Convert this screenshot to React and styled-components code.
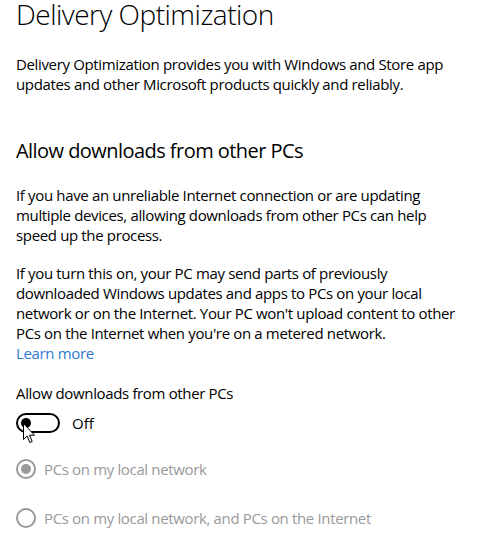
import React from "react";
import styled, { createGlobalStyle } from "styled-components";

const Global = createGlobalStyle`
  html, body { margin: 0; padding: 0; background: #fff; }
  body { font-family: "Open Sans", "Noto Sans", sans-serif; color: #000; }
`;

const Page = styled.div`
  padding: 0 16px;
  width: 495px;
  height: 545px;
  box-sizing: border-box;
  overflow: hidden;
  position: relative;
`;

const Title = styled.h1`
  margin: 0;
  padding-top: 1px;
  font-size: 28px;
  line-height: 26px;
  font-weight: 300;
  letter-spacing: -0.5px;
`;

const Para = styled.p`
  margin: ${(p) => p.$top}px 0 0;
  font-size: 15px;
  line-height: 20px;
  font-weight: 400;
  white-space: nowrap;
  letter-spacing: -0.35px;
`;

const SubHeading = styled.h2`
  margin: ${(p) => p.$top}px 0 0;
  font-size: 20px;
  line-height: 28px;
  font-weight: 400;
  letter-spacing: -0.55px;
`;

const Link = styled.a`
  color: #2f79d0;
  text-decoration: none;
`;

const Label = styled.div`
  margin-top: ${(p) => p.$top}px;
  font-size: 15px;
  line-height: 20px;
  letter-spacing: -0.35px;
`;

const ToggleRow = styled.div`
  margin-top: ${(p) => p.$top}px;
  display: flex;
  align-items: center;
  gap: 12px;
  position: relative;
`;

const Track = styled.div`
  width: 44px;
  height: 20px;
  box-sizing: border-box;
  border: 2px solid #000;
  border-radius: 10px;
  display: flex;
  align-items: center;
  padding-left: 3px;
`;

const Thumb = styled.div`
  width: 10px;
  height: 10px;
  border-radius: 50%;
  background: #000;
`;

const ToggleText = styled.span`
  font-size: 15px;
  line-height: 20px;
`;

const Cursor = styled.svg`
  position: absolute;
  left: 7px;
  top: 10px;
`;

const RadioRow = styled.div`
  margin-top: ${(p) => p.$top}px;
  display: flex;
  align-items: center;
  gap: 8px;
`;

const RadioCircle = styled.div`
  width: 20px;
  height: 20px;
  box-sizing: border-box;
  border: 2px solid #999;
  border-radius: 50%;
  display: flex;
  align-items: center;
  justify-content: center;
  &::after {
    content: "";
    display: ${(p) => (p.$checked ? "block" : "none")};
    width: 10px;
    height: 10px;
    border-radius: 50%;
    background: #999;
  }
`;

const RadioText = styled.span`
  font-size: 15px;
  line-height: 20px;
  color: #999;
  letter-spacing: -0.35px;
`;

export default function App() {
  return (
    <Page>
      <Global />
      <Title>Delivery Optimization</Title>
      <Para $top={27}>
        Delivery Optimization provides you with Windows and Store app
        <br />
        updates and other Microsoft products quickly and reliably.
      </Para>
      <SubHeading $top={43}>Allow downloads from other PCs</SubHeading>
      <Para $top={20}>
        If you have an unreliable Internet connection or are updating
        <br />
        multiple devices, allowing downloads from other PCs can help
        <br />
        speed up the process.
      </Para>
      <Para $top={18}>
        If you turn this on, your PC may send parts of previously
        <br />
        downloaded Windows updates and apps to PCs on your local
        <br />
        network or on the Internet. Your PC won't upload content to other
        <br />
        PCs on the Internet when you're on a metered network.
        <br />
        <Link href="#">Learn more</Link>
      </Para>
      <Label $top={20}>Allow downloads from other PCs</Label>
      <ToggleRow $top={10}>
        <Track>
          <Thumb />
        </Track>
        <ToggleText>Off</ToggleText>
        <Cursor width="13" height="21" viewBox="0 0 13 21">
          <path
            d="M0.5 0.5 L0.5 16.5 L4.2 13 L6.8 19.5 L9.2 18.5 L6.6 12.2 L11.5 12.2 Z"
            fill="#fff"
            stroke="#000"
            strokeWidth="1"
            strokeLinejoin="miter"
          />
        </Cursor>
      </ToggleRow>
      <RadioRow $top={26}>
        <RadioCircle $checked />
        <RadioText>PCs on my local network</RadioText>
      </RadioRow>
      <RadioRow $top={29}>
        <RadioCircle />
        <RadioText>PCs on my local network, and PCs on the Internet</RadioText>
      </RadioRow>
    </Page>
  );
}
